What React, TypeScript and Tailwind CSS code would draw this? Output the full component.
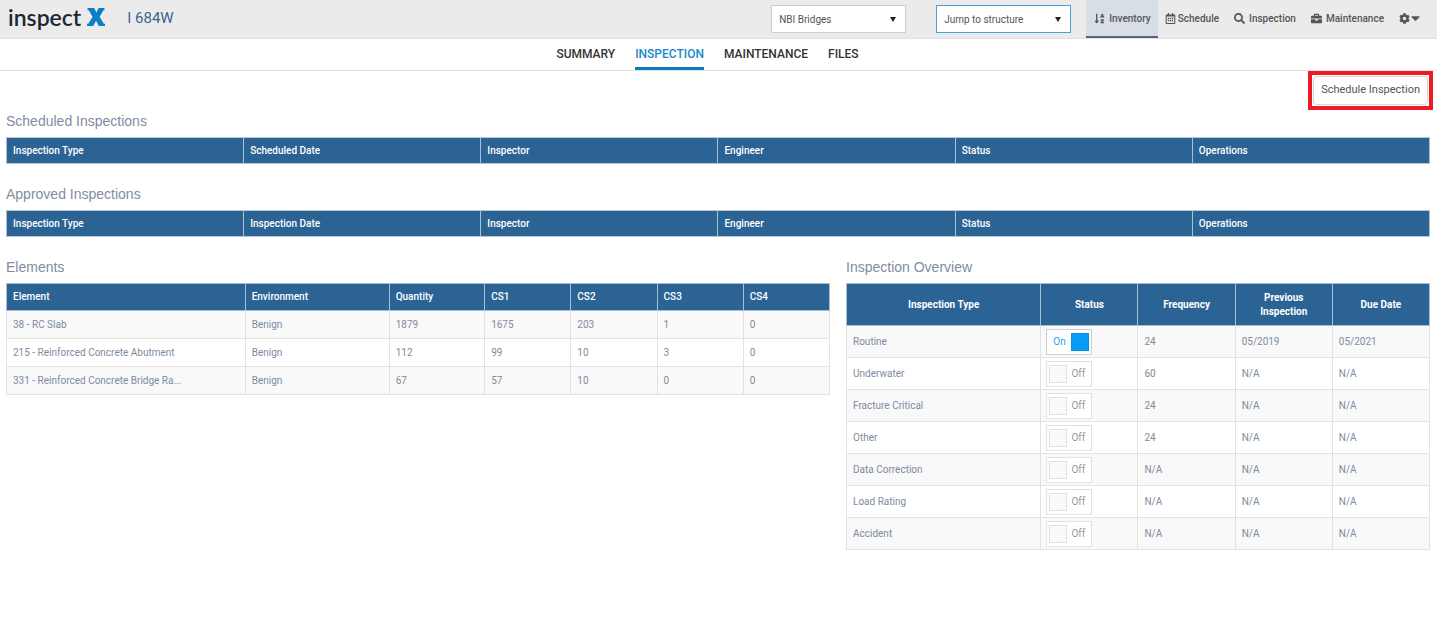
import { FaBriefcase, FaCaretDown, FaCog, FaRegCalendarAlt, FaSearch, FaSortAlphaDown } from 'react-icons/fa'

const scheduledColumns = ['Inspection Type', 'Scheduled Date', 'Inspector', 'Engineer', 'Status', 'Operations']
const approvedColumns = ['Inspection Type', 'Inspection Date', 'Inspector', 'Engineer', 'Status', 'Operations']

const elementColumns = [
  { label: 'Element', width: 'w-[29%]' },
  { label: 'Environment', width: 'w-[17.5%]' },
  { label: 'Quantity', width: 'w-[11.6%]' },
  { label: 'CS1', width: '' },
  { label: 'CS2', width: '' },
  { label: 'CS3', width: '' },
  { label: 'CS4', width: '' },
]

const elements = [
  ['38 - RC Slab', 'Benign', '1879', '1675', '203', '1', '0'],
  ['215 - Reinforced Concrete Abutment', 'Benign', '112', '99', '10', '3', '0'],
  ['331 - Reinforced Concrete Bridge Ra...', 'Benign', '67', '57', '10', '0', '0'],
]

const overviewColumns = [
  { label: 'Inspection Type', width: 'w-1/3' },
  { label: 'Status', width: '' },
  { label: 'Frequency', width: '' },
  { label: 'Previous Inspection', width: '' },
  { label: 'Due Date', width: '' },
]

const overview = [
  { type: 'Routine', on: true, frequency: '24', previous: '05/2019', due: '05/2021' },
  { type: 'Underwater', on: false, frequency: '60', previous: 'N/A', due: 'N/A' },
  { type: 'Fracture Critical', on: false, frequency: '24', previous: 'N/A', due: 'N/A' },
  { type: 'Other', on: false, frequency: '24', previous: 'N/A', due: 'N/A' },
  { type: 'Data Correction', on: false, frequency: 'N/A', previous: 'N/A', due: 'N/A' },
  { type: 'Load Rating', on: false, frequency: 'N/A', previous: 'N/A', due: 'N/A' },
  { type: 'Accident', on: false, frequency: 'N/A', previous: 'N/A', due: 'N/A' },
]

function Logo() {
  return (
    <a href="#" className="flex items-center gap-[6px] pb-1 text-[#1d2733]">
      <span className="font-['Lato',sans-serif] text-[23px] leading-6 font-semibold">inspect</span>
      <svg viewBox="0 0 18 18" className="h-[18px] w-[18px]" fill="#0a7fc6" aria-label="X">
        <path d="M.6 0h6.6l2.2 4.4L11.6 0h5.8v2.2h-.9L12.6 8.8l4.3 7h1.1V18h-6.1L9 12.8 6.2 18H0v-2.2h1.2L5.6 9 1.8 2.2H.6z" />
      </svg>
    </a>
  )
}

function Picker({ label, options, border }: { label: string; options: string[]; border: string }) {
  return (
    <div className="relative">
      <select
        aria-label={label}
        className={`block h-7 w-[135px] appearance-none border bg-white px-[7px] text-[10px] text-[#555] ${border}`}
      >
        {options.map((option) => (
          <option key={option}>{option}</option>
        ))}
      </select>
      <svg
        viewBox="0 0 6 5"
        className="pointer-events-none absolute top-3 right-[10px] h-[5px] w-[6px]"
        fill="#222"
        aria-hidden="true"
      >
        <path d="M0 0h6L3 5z" />
      </svg>
    </div>
  )
}

function Header() {
  return (
    <header className="flex h-[39px] items-center border-b border-[#dfe0e6] bg-[#ebebeb] pr-[17px] pl-2">
      <Logo />
      <h1 className="ml-[22px] pb-px text-[15px] text-[#3a6590]">I 684W</h1>

      <div className="ml-auto flex items-center gap-[30px]">
        <Picker label="Structure group" options={['NBI Bridges']} border="border-[#ccc]" />
        <Picker label="Jump to structure" options={['Jump to structure']} border="border-[#4a9fd5]" />
      </div>

      <nav className="ml-[15px] flex h-full items-center text-[10px] font-medium text-[#555]">
        <a
          href="#"
          className="flex h-full items-center gap-1 border-b-2 border-[#51677f] bg-[#d8dee5] pr-[7px] pl-2"
        >
          <FaSortAlphaDown className="size-[11px]" />
          Inventory
        </a>
        <a href="#" className="ml-[7px] flex h-full items-center gap-[2px] border-b-2 border-transparent">
          <FaRegCalendarAlt className="size-[11px]" />
          Schedule
        </a>
        <a href="#" className="ml-[15px] flex h-full items-center gap-1 border-b-2 border-transparent">
          <FaSearch className="size-[11px]" />
          Inspection
        </a>
        <a href="#" className="ml-[15px] flex h-full items-center gap-1 border-b-2 border-transparent">
          <FaBriefcase className="size-[11px]" />
          Maintenance
        </a>
        <button
          type="button"
          aria-label="Settings"
          className="ml-[15px] flex h-full items-center gap-px border-b-2 border-transparent"
        >
          <FaCog className="size-[11px]" />
          <FaCaretDown className="h-[14px] w-[9px]" />
        </button>
      </nav>
    </header>
  )
}

function Tabs() {
  return (
    <nav className="-ml-[22px] flex h-8 justify-center gap-5 border-b border-[#e2e2e2] text-[12px] leading-[30px] font-medium text-[#333]">
      <a href="#">SUMMARY</a>
      <a href="#" aria-current="page" className="border-b-3 border-[#0a7bbd] text-[#1b87c9]">
        INSPECTION
      </a>
      <a href="#">MAINTENANCE</a>
      <a href="#">FILES</a>
    </nav>
  )
}

function SectionTitle({ children }: { children: string }) {
  return <h2 className="mb-2 font-['Liberation_Sans',sans-serif] text-[14px] leading-4 text-[#7f8ca3]">{children}</h2>
}

function InspectionTable({ title, columns }: { title: string; columns: string[] }) {
  return (
    <section>
      <SectionTitle>{title}</SectionTitle>
      <table className="w-full table-fixed border-collapse border border-[#b9c8d6] bg-[#2a6394] text-left text-[10px] leading-3 text-white">
        <thead>
          <tr className="h-[26px]">
            {columns.map((column) => (
              <th key={column} className="border-x border-[#a9bfd2] px-[6px] font-medium">
                {column}
              </th>
            ))}
          </tr>
        </thead>
      </table>
    </section>
  )
}

function ElementsTable() {
  return (
    <section className="col-span-7">
      <SectionTitle>Elements</SectionTitle>
      <table className="w-full table-fixed border-collapse text-left text-[10px] leading-3 text-[#7d8ba1]">
        <thead className="bg-[#2a6394] text-white">
          <tr className="h-[27px]">
            {elementColumns.map((column) => (
              <th key={column.label} className={`border border-[#a9bfd2] px-[6px] font-medium ${column.width}`}>
                {column.label}
              </th>
            ))}
          </tr>
        </thead>
        <tbody>
          {elements.map((row) => (
            <tr key={row[0]} className="h-7 odd:bg-[#f9f9f9]">
              {row.map((cell, i) => (
                <td key={i} className="border border-[#e2e2e2] px-[6px] whitespace-nowrap">
                  {cell}
                </td>
              ))}
            </tr>
          ))}
        </tbody>
      </table>
    </section>
  )
}

function Toggle({ label, on }: { label: string; on: boolean }) {
  return (
    <label className="flex h-[26px] w-[46px] cursor-pointer items-center justify-between border border-[#e2e2e2] bg-white px-[2px] text-[#999] has-checked:flex-row-reverse has-checked:border-[#d0d0d0] has-checked:text-[#2b9cf0]">
      <input
        type="checkbox"
        defaultChecked={on}
        aria-label={label}
        className="size-[18px] appearance-none border border-[#e2e2e2] bg-[#fafafa] checked:border-[#0b8fe0] checked:bg-[#049cf5]"
      />
      <span className="px-1">{on ? 'On' : 'Off'}</span>
    </label>
  )
}

function OverviewTable() {
  return (
    <section className="col-span-5">
      <SectionTitle>Inspection Overview</SectionTitle>
      <table className="w-full table-fixed border-collapse text-left text-[10px] leading-3 text-[#7d8ba1]">
        <thead className="bg-[#2a6394] text-center leading-[14px] text-white">
          <tr className="h-[42px]">
            {overviewColumns.map((column) => (
              <th key={column.label} className={`border border-[#a9bfd2] px-[6px] font-bold ${column.width}`}>
                {column.label}
              </th>
            ))}
          </tr>
        </thead>
        <tbody>
          {overview.map((row) => (
            <tr key={row.type} className="h-8 odd:bg-[#f9f9f9]">
              <td className="border border-[#e2e2e2] px-[6px]">{row.type}</td>
              <td className="border border-[#e2e2e2] px-[5px]">
                <Toggle label={row.type} on={row.on} />
              </td>
              <td className="border border-[#e2e2e2] px-[6px]">{row.frequency}</td>
              <td className="border border-[#e2e2e2] px-[6px]">{row.previous}</td>
              <td className="border border-[#e2e2e2] px-[6px]">{row.due}</td>
            </tr>
          ))}
        </tbody>
      </table>
    </section>
  )
}

export default function App() {
  return (
    <div className="min-h-screen bg-white font-['Roboto',sans-serif]">
      <Header />
      <Tabs />
      <main className="pr-[7px] pl-[6px]">
        <div className="flex justify-end">
          <div className="-mr-[3px] border-4 border-[#ed1c24] p-px">
            <button
              type="button"
              className="block h-[29px] rounded-sm border border-[#d5d5d5] bg-white px-[7px] text-[11px] text-[#555]"
            >
              Schedule Inspection
            </button>
          </div>
        </div>
        <div className="mt-[3px] flex flex-col gap-[22px]">
          <InspectionTable title="Scheduled Inspections" columns={scheduledColumns} />
          <InspectionTable title="Approved Inspections" columns={approvedColumns} />
          <div className="grid grid-cols-12 gap-4">
            <ElementsTable />
            <OverviewTable />
          </div>
        </div>
      </main>
    </div>
  )
}
